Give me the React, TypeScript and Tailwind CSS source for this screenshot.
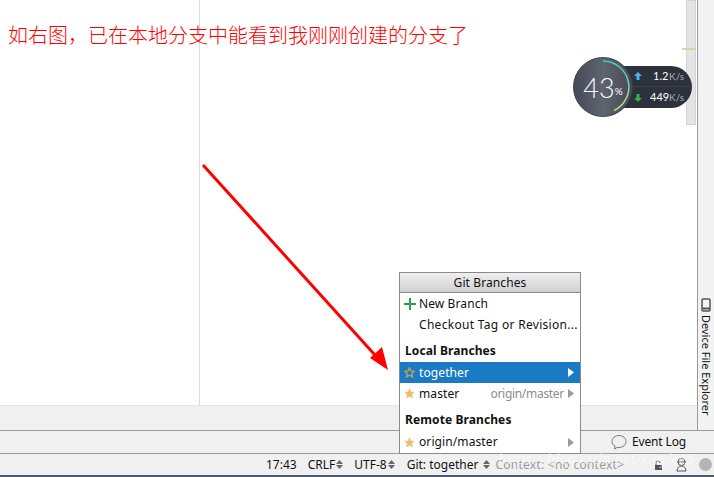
function Updown() {
  return (
    <span className="inline-flex flex-col gap-[1px]">
      <svg width="7" height="4" viewBox="0 0 7 4"><path d="M3.500 0L7 4H0z" fill="#666" /></svg>
      <svg width="7" height="4" viewBox="0 0 7 4"><path d="M3.500 4L0 0h7z" fill="#666" /></svg>
    </span>
  );
}

function Star({ hollow }: { hollow?: boolean }) {
  return (
    <svg width="11" height="11" viewBox="0 0 24 24" className="shrink-0">
      <path
        d="M12 1.500l3.200 7 7.300.8-5.400 5 1.500 7.400L12 18l-6.600 3.700 1.500-7.400-5.400-5 7.300-.8z"
        fill={hollow ? 'none' : '#f2bb6b'}
        stroke={hollow ? '#c6a05c' : '#f2bb6b'}
        strokeWidth={hollow ? 3 : 1}
      />
    </svg>
  );
}

function Arrow({ color }: { color: string }) {
  return (
    <svg width="6" height="9" viewBox="0 0 6 9" className="shrink-0">
      <path d="M0 0l6 4.500L0 9z" fill={color} />
    </svg>
  );
}

function Gauge() {
  return (
    <div className="absolute left-[573px] top-[57px] font-['Lato',sans-serif]">
      <div className="absolute left-[40px] top-[9px] h-[42px] w-[79px] rounded-r-[21px] bg-[#2d313b]">
        <div className="flex h-[21px] items-center border-b border-[#3a3f4a] pl-[21px]">
          <svg width="8" height="8" viewBox="0 0 8 8" className="mr-[11px]"><path d="M4 0l4 4H5.500v4h-3V4H0z" fill="#47b4f2" /></svg>
          <span className="w-[16px] text-[11px] text-white">1.2</span>
          <span className="text-[10px] text-[#a8adb7]">K/s</span>
        </div>
        <div className="flex h-[21px] items-center pl-[21px]">
          <svg width="8" height="8" viewBox="0 0 8 8" className="mr-[8px]"><path d="M4 8l4-4H5.500V0h-3v4H0z" fill="#37b34a" /></svg>
          <span className="w-[19px] text-[11px] text-white">449</span>
          <span className="text-[10px] text-[#a8adb7]">K/s</span>
        </div>
      </div>
      <div className="relative flex h-[60px] w-[60px] items-center justify-center rounded-full border border-[#3b3f4a] bg-gradient-to-r from-[#464a56] via-[#5f6471] to-[#464a56]">
        <svg width="60" height="60" viewBox="0 0 60 60" className="absolute -top-[1px] -left-[1px]">
          <defs>
            <linearGradient id="ring" x1="0" y1="0" x2="0" y2="1">
              <stop offset="0" stopColor="#3fd0c0" />
              <stop offset="1" stopColor="#b6e070" />
            </linearGradient>
          </defs>
          <path d="M30 4A26 26 0 0 1 41 53.500" fill="none" stroke="url(#ring)" strokeWidth="1.500" />
        </svg>
        <span className="relative text-[27px] leading-none font-light text-white">43</span>
        <span className="relative mt-[9px] text-[10px] text-white">%</span>
      </div>
    </div>
  );
}

function Popup() {
  return (
    <div className="absolute left-[399px] top-[272px] w-[182px] border border-[#8a8a8a] bg-white text-[12px] tracking-[0.1px] text-[#111]">
      <div className="flex h-[20px] items-center justify-center border-b border-[#8a8a8a] bg-gradient-to-b from-[#efefef] to-[#d0d0d0]">
        Git Branches
      </div>
      <div className="flex h-[21px] items-center gap-[3px] pl-[4px]">
        <svg width="12" height="12" viewBox="0 0 12 12"><path d="M6 0v12M0 6h12" stroke="#2f9e4a" strokeWidth="2" /></svg>
        New Branch
      </div>
      <div className="flex h-[21px] items-center pl-[19px] tracking-[0.3px] whitespace-nowrap">Checkout Tag or Revision...</div>
      <div className="flex h-[27px] items-end pb-[2px] pl-[5px] font-bold">Local Branches</div>
      <div className="flex h-[21px] items-center gap-[4px] bg-[#1a7bc4] pr-[6px] pl-[4px] text-white">
        <Star hollow />
        <span className="flex-1">together</span>
        <Arrow color="#ffffff" />
      </div>
      <div className="flex h-[21px] items-center gap-[4px] pr-[6px] pl-[4px]">
        <Star />
        <span className="flex-1">master</span>
        <span className="tracking-[-0.3px] text-[#8c8c8c]">origin/master</span>
        <Arrow color="#9a9a9a" />
      </div>
      <div className="flex h-[27px] items-end pb-[2px] pl-[5px] font-bold">Remote Branches</div>
      <div className="flex h-[22px] items-center gap-[4px] pr-[6px] pl-[4px]">
        <Star />
        <span className="flex-1">origin/master</span>
        <Arrow color="#9a9a9a" />
      </div>
    </div>
  );
}

export default function App() {
  return (
    <div className="relative flex h-[477px] w-[714px] flex-col overflow-hidden bg-white font-['Noto_Sans',sans-serif] text-[12px] text-[#111]">
      <div className="flex min-h-0 flex-1">
        <div className="relative flex min-w-0 flex-1 flex-col">
          <div className="flex min-h-0 flex-1">
            <div className="w-[200px] border-r border-[#dcdcdc] pt-[21px] pl-[8px]">
              <p className="w-[500px] font-['Noto_Sans_CJK_SC',sans-serif] text-[20px] leading-[28px] font-light whitespace-nowrap text-[#ff0000]">
                如右图，已在本地分支中能看到我刚刚创建的分支了
              </p>
            </div>
            <div className="flex-1" />
            <div className="relative mr-[1px] h-[125px] w-[10px] border border-[#d4d4d4] bg-[#e4e4e4]">
              <div className="absolute top-[47px] -left-[5px] h-[2px] w-[14px] bg-[#d8d2b0]" />
            </div>
          </div>
          <div className="h-[25px] border-t border-[#e4e4e4] bg-[#f0f0f0]" />
        </div>
        <div className="flex w-[17px] flex-col items-center border-l border-[#9a9a9a] bg-[#f3f3f3] pt-[298px]">
          <svg width="10" height="14" viewBox="0 0 10 14">
            <rect x="1" y="1" width="8" height="12" rx="1" fill="none" stroke="#555" strokeWidth="1.500" />
            <path d="M1 10.500h8" stroke="#555" strokeWidth="2" />
          </svg>
          <span className="mt-[3px] text-[11px] leading-[14px] whitespace-nowrap [writing-mode:vertical-rl]">Device File Explorer</span>
        </div>
      </div>
      <div className="flex h-[23px] items-center justify-end gap-[5px] border-t border-[#9a9a9a] bg-[#f0f0f0] pr-[28px]">
        <svg width="16" height="16" viewBox="0 0 16 16">
          <path d="M8 1.500c3.900 0 7 2.700 7 6s-3.100 6-7 6c-.6 0-1.200 0-1.700-.2L3.500 15l.5-3C2.200 11 1 9.400 1 7.500c0-3.300 3.100-6 7-6z" fill="none" stroke="#777" />
        </svg>
        <span className="tracking-[-0.15px]">Event Log</span>
      </div>
      <div className="relative flex h-[24px] items-center border-t border-[#9a9a9a] border-b-2 border-b-[#4a5a6a] bg-[#f0f0f0] pl-[266px]">
        <span>17:43</span>
        <span className="ml-[11px] flex items-center gap-[1px]">CRLF<Updown /></span>
        <span className="ml-[11px] flex items-center gap-[1px]">UTF-8<Updown /></span>
        <span className="ml-[12px] flex items-center gap-[5px]">Git: together<Updown /></span>
        <span className="ml-[5px] tracking-[0.25px] text-[#9a9a9a]">Context: &lt;no context&gt;</span>
        <svg width="9" height="10" viewBox="0 0 9 10" className="ml-[30px]">
          <path d="M2 5V3a2 2 0 0 1 4 0" fill="none" stroke="#555" />
          <rect x="1" y="5" width="7" height="5" fill="#555" />
        </svg>
        <svg width="13" height="15" viewBox="0 0 13 15" className="ml-[12px]">
          <circle cx="6.500" cy="5" r="3.500" fill="none" stroke="#555" />
          <path d="M2 14c0-3 2-5 4.500-5s4.500 2 4.500 5z" fill="none" stroke="#555" />
          <path d="M2 5h9" stroke="#555" />
        </svg>
        <span className="ml-[11px] h-[13px] w-[13px] shrink-0 rounded-full bg-[#b4b4b4]" />
      </div>
      <Gauge />
      <Popup />
      {/* blog watermark */}
      <span className="absolute left-[498px] top-[446px] text-[15px] leading-[24px] whitespace-nowrap text-white/50 italic">
        https://blog.csdn.net/xiaylee5
      </span>
      {/* red annotation arrow */}
      <svg width="200" height="215" viewBox="0 0 200 215" className="absolute left-[200px] top-[160px]">
        <path d="M3 5L184 205" stroke="#ff0000" strokeWidth="3" />
        <path d="M188 210L170 198L182 187z" fill="#ff0000" />
      </svg>
    </div>
  );
}
